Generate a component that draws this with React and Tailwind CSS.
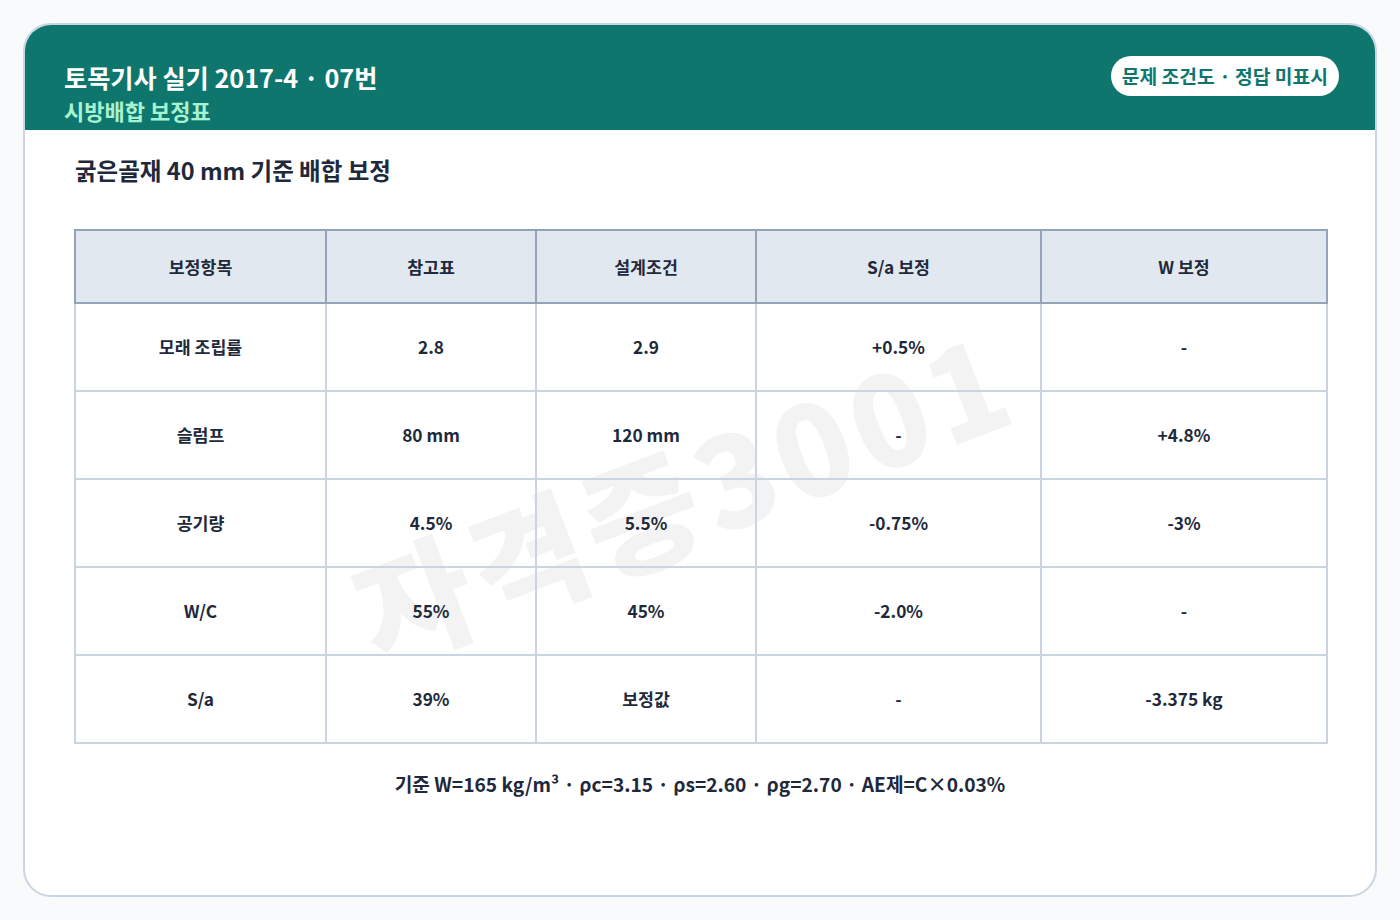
import React from 'react';

const font = {
  fontFamily: '"Noto Sans CJK KR", "Noto Sans", sans-serif',
};

const headers = ['보정항목', '참고표', '설계조건', 'S/a 보정', 'W 보정'];

const rows = [
  ['모래 조립률', '2.8', '2.9', '+0.5%', '-'],
  ['슬럼프', '80 mm', '120 mm', '-', '+4.8%'],
  ['공기량', '4.5%', '5.5%', '-0.75%', '-3%'],
  ['W/C', '55%', '45%', '-2.0%', '-'],
  ['S/a', '39%', '보정값', '-', '-3.375 kg'],
];

const colWidths = ['w-[251px]', 'w-[210px]', 'w-[220px]', 'w-[285px]', 'w-[286px]'];

function App() {
  return (
    <div className="min-h-screen bg-[#f8fafc] p-[23px]" style={font}>
      <div className="relative h-[874px] overflow-hidden rounded-[28px] border-2 border-[#cbd5e1] bg-white">
        {/* header */}
        <div className="flex h-[105px] justify-between bg-[#0f766e] pl-[39px] pr-[36px]">
          <div className="pt-[35px]">
            <h1 className="text-[25.2px] font-bold leading-[34px] text-white">
              토목기사 실기 2017-4 · 07번
            </h1>
            <p className="mt-[3px] text-[22px] font-bold leading-[26px] text-[#a7f3d0]">
              시방배합 보정표
            </p>
          </div>
          <div className="mt-[31px] flex h-[40px] items-center rounded-full bg-white px-[11px] text-[19.3px] font-bold text-[#0f766e]">
            문제 조건도 · 정답 미표시
          </div>
        </div>

        {/* watermark */}
        <div className="pointer-events-none absolute left-[657px] top-[467px] -translate-x-1/2 -translate-y-1/2 -rotate-[21deg] select-none whitespace-nowrap text-[125px] font-black leading-none tracking-[6px] text-[#0f172a]/[0.05]">
          자격증3001
        </div>

        <div className="relative px-[49px] pt-[24px]">
          <h2 className="pl-[1px] text-[23.5px] font-bold leading-[32px] text-[#1e293b]">
            굵은골재 40 mm 기준 배합 보정
          </h2>

          <table className="mt-[43px] w-[1252px] table-fixed border-collapse text-[17.3px] font-bold text-[#1e293b]">
            <thead>
              <tr className="h-[73px] bg-[#e2e8f0]">
                {headers.map((h, i) => (
                  <th
                    key={h}
                    className={`${colWidths[i]} border-2 border-[#94a3b8] text-center font-bold`}
                  >
                    {h}
                  </th>
                ))}
              </tr>
            </thead>
            <tbody>
              {rows.map((r) => (
                <tr key={r[0]} className="h-[88px]">
                  {r.map((c, i) => (
                    <td key={i} className="border-2 border-[#cbd5e1] text-center">
                      {c}
                    </td>
                  ))}
                </tr>
              ))}
            </tbody>
          </table>

          <p className="mt-[26px] text-center text-[19.2px] font-bold leading-[28px] text-[#1e293b]">
            기준 W=165 kg/m³ · ρc=3.15 · ρs=2.60 · ρg=2.70 · AE제=C×0.03%
          </p>
        </div>
      </div>
    </div>
  );
}

export default App;
